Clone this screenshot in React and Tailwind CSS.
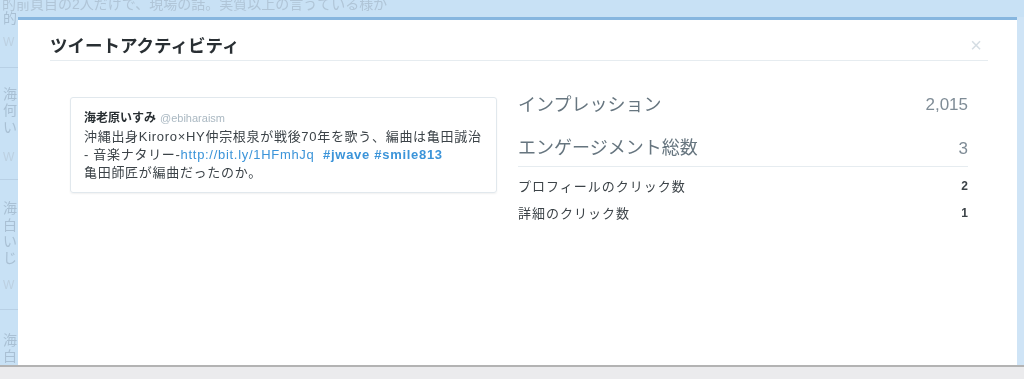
const JP = "font-['Liberation_Sans','Noto_Sans_CJK_JP',sans-serif]";

const STATS = [
  { label: 'インプレッション', value: '2,015' },
  { label: 'エンゲージメント総数', value: '3' },
];

const DETAILS = [
  { label: 'プロフィールのクリック数', value: '2' },
  { label: '詳細のクリック数', value: '1' },
];

function TweetCard() {
  return (
    <div className="w-[427px] h-[96px] border border-[#e1e8ed] rounded-[3px] shadow-[0_1px_2px_rgba(0,0,0,0.06)] pl-[13px] pr-2 pt-[11px]">
      <div className="flex items-baseline gap-1 leading-[18px]">
        <span className="text-[12px] font-bold text-[#292f33]">海老原いすみ</span>
        <span className="text-[11px] text-[#aab8c2]">@ebiharaism</span>
      </div>
      <p className="text-[13px] tracking-[0.7px] leading-[18px] text-[#3c4348] mt-[1px] whitespace-nowrap">
        沖縄出身Kiroro×HY仲宗根泉が戦後70年を歌う、編曲は亀田誠治
        <br />
        - 音楽ナタリー-<span className="text-[#3b94d9]">http://bit.ly/1HFmhJq</span>{' '}
        <span className="text-[#3b94d9] font-bold">&nbsp;#jwave #smile813</span>
        <br />
        亀田師匠が編曲だったのか。
      </p>
    </div>
  );
}

function Stats() {
  return (
    <div className="w-[450px] -mt-[14px]">
      <div className="flex items-center justify-between h-[44px]">
        <span className="text-[18px] text-[#66757f]">{STATS[0].label}</span>
        <span className="text-[17px] text-[#7f8c96]">{STATS[0].value}</span>
      </div>
      <div className="flex items-center justify-between h-[40px] pt-[4px] border-b border-[#e6ecf0]">
        <span className="text-[18px] text-[#66757f]">{STATS[1].label}</span>
        <span className="text-[17px] text-[#7f8c96]">{STATS[1].value}</span>
      </div>
      <div className="pt-[10px]">
        {DETAILS.map(d => (
          <div key={d.label} className="flex items-start justify-between h-[27px]">
            <span className="text-[13px] tracking-[1px] text-[#3c4348]">{d.label}</span>
            <span className="text-[12px] font-bold text-[#3c4348]">{d.value}</span>
          </div>
        ))}
      </div>
    </div>
  );
}

// timeline behind the modal, only a sliver shows on the left
function SideStrip() {
  const faint = 'leading-[16px] text-[#bcd0e1] text-[12px]';
  const sep = 'h-px bg-[#b8d0e5] -ml-[3px] w-[18px]';
  return (
    <div className="w-[18px] shrink-0 flex flex-col pl-[3px] text-[14px] text-[#a9c0d4] whitespace-nowrap">
      <div className="-mt-[7px] leading-[16px]">的</div>
      <div className={`mt-[8px] ${faint}`}>W</div>
      <div className={`mt-[17px] ${sep}`} />
      <div className="mt-[18px] leading-[16.5px]">海<br />何<br />い</div>
      <div className={`mt-[14px] ${faint}`}>W</div>
      <div className={`mt-[14px] ${sep}`} />
      <div className="mt-[20px] leading-[16.5px]">海<br />白<br />い<br />じ</div>
      <div className={`mt-[11px] ${faint}`}>W</div>
      <div className={`mt-[16px] ${sep}`} />
      <div className="mt-[22px] leading-[16.5px]">海<br />白</div>
    </div>
  );
}

export default function App() {
  return (
    <div className={`w-[1024px] h-[379px] overflow-hidden bg-[#c8e1f5] flex flex-col ${JP} blur-[0.4px]`}>
      {/* background timeline peeking above */}
      <div className="h-[17px] shrink-0 overflow-hidden">
        <p className="-mt-[6px] pl-[2px] text-[14px] text-[#b0c5d7] whitespace-nowrap">
          的前頁目の2人だけで、現場の話。実質以上の言うている様が
        </p>
      </div>

      <div className="flex flex-1 min-h-0">
        <SideStrip />

        {/* modal */}
        <div className="flex-1 bg-white border-t-[3px] border-[#87b6df] flex flex-col">
          <div className="mx-[32px] mr-[29px] h-[41px] border-b border-[#e6ecf0] flex items-end justify-between pb-[5px]">
            <h2 className="text-[17.5px] font-bold text-[#292f33] leading-none">ツイートアクティビティ</h2>
            <span className="text-[20px] leading-none text-[#d5dde3] mr-[6px]">×</span>
          </div>
          <div className="flex gap-[21px] pl-[52px] pt-[36px]">
            <TweetCard />
            <Stats />
          </div>
        </div>

        <div className="w-[7px] shrink-0 bg-[#cfe4f6]" />
      </div>

      {/* bottom bar */}
      <div className="h-[14px] shrink-0 border-t-2 border-[#b3b3b3] bg-[#ebebed]" />
    </div>
  );
}
